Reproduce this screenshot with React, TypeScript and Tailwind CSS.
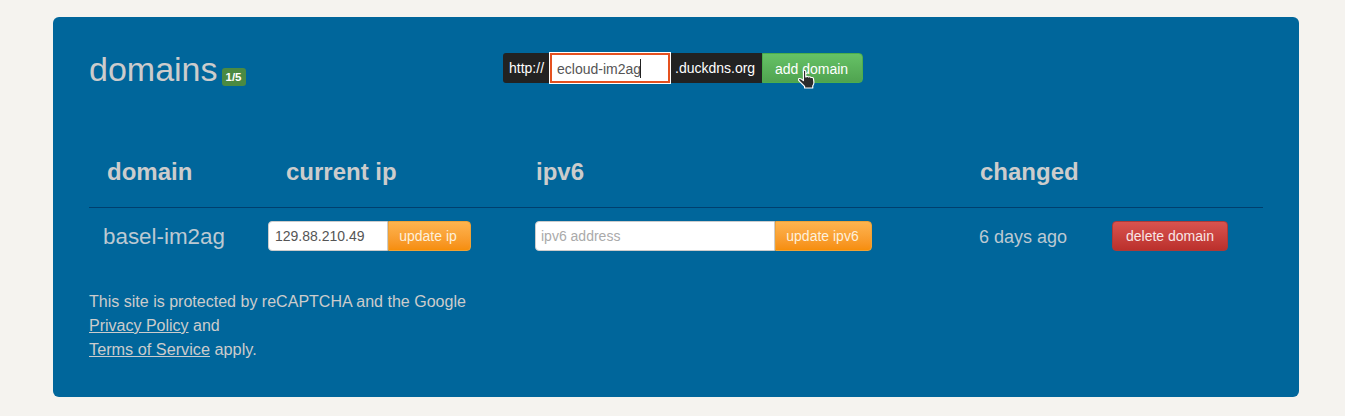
export default function App() {
  return (
    <div className="h-[416px] bg-[#f5f3ef] pt-[17px] px-[53px] pr-[46px] font-['Liberation_Sans',Arial,sans-serif] text-[14px] overflow-hidden">
      <div className="h-[380px] rounded-[6px] bg-[#00669b] pl-[36px] pr-[36px] text-[#cccccc]">
        <div className="flex h-[131px]">
          <div className="w-[414px] pt-[32px] flex items-start">
            <span className="text-[34px] leading-[40px]">domains</span>
            <span className="ml-[4px] mt-[19px] h-[18px] w-[24px] rounded-[3px] bg-[#4b8a42] text-center text-[11.5px] font-bold leading-[18px] text-white">1/5</span>
          </div>
          <div className="pt-[36px]">
            <div className="flex h-[30px] text-[14px] leading-[30px]">
              <span className="w-[46px] rounded-l-[3px] bg-[#222222] pl-[6px] text-white">http://</span>
              <div className="relative h-[32px] -mt-[1px] w-[122px] border border-white bg-white">
                <div className="h-full border-2 border-[#e5511f] pl-[5px] text-[#555555] leading-[28px]">ecloud-im2ag</div>
                <span className="absolute left-[90px] top-[6px] h-[19px] w-px bg-[#222222]" />
              </div>
              <span className="w-[91px] bg-[#222222] pl-[4px] text-white">.duckdns.org</span>
              <div className="relative h-[30px] w-[101px] rounded-r-[4px] border border-[#4cae4c] bg-gradient-to-b from-[#66c266] to-[#50a350] pr-[2px] text-center leading-[30px] text-white">
                add domain
                <svg className="absolute left-[34px] top-[15px]" width="21" height="20" viewBox="0 0 18 19" preserveAspectRatio="none">
                  <path d="M5.500 2.200c0-1.300 2-1.300 2 0V7.500h.3c.5-.7 1.800-.6 2.100.2.600-.5 1.800-.3 2.100.5.700-.4 1.900-.1 2.100 1l.4 3.300c.1 1.500-.4 2.600-1 3.500V18H6.500v-1.500L2 11.500c-.9-1-.9-2-.2-2.400.8-.4 1.900.1 3.700 2z" fill="#2b2b2b" stroke="#ffffff" strokeWidth="1" strokeLinejoin="round" />
                </svg>
              </div>
            </div>
          </div>
        </div>
        <div className="grid h-[60px] grid-cols-[179px_267px_444px_133px_1fr] items-center border-b border-[#003f6e] pb-[12px] text-[24px] font-bold leading-[28px]">
          <span className="pl-[18px]">domain</span>
          <span className="pl-[18px]">current ip</span>
          <span className="pl-[1px]">ipv6</span>
          <span className="pl-[1px]">changed</span>
          <span />
        </div>
        <div className="grid h-[56px] grid-cols-[179px_267px_444px_133px_1fr] items-center">
          <span className="pl-[14px] pt-[1px] text-[22.4px] text-[#bcc9d2]">basel-im2ag</span>
          <div className="flex h-[30px] w-[203px]">
            <input readOnly value="129.88.210.49" className="h-full w-[120px] rounded-l-[4px] border border-[#cccccc] bg-white px-[6px] text-[14px] text-[#555555] outline-none" />
            <span className="flex-1 rounded-r-[4px] border border-[#eea236] bg-gradient-to-b from-[#fdb44e] to-[#f68e0a] pr-[3px] text-center leading-[28px] text-[#fdf0dc]">update ip</span>
          </div>
          <div className="flex h-[30px] w-[337px]">
            <input readOnly placeholder="ipv6 address" className="h-full w-[240px] rounded-l-[4px] border border-[#cccccc] bg-white px-[5px] text-[14px] text-[#555555] outline-none placeholder:text-[#aaaaaa]" />
            <span className="flex-1 rounded-r-[4px] border border-[#eea236] bg-gradient-to-b from-[#fdb44e] to-[#f68e0a] pr-[2px] text-center leading-[28px] text-[#fdf0dc]">update ipv6</span>
          </div>
          <span className="pt-[2px] text-[18px] text-[#bcc9d2]">6 days ago</span>
          <span className="h-[30px] w-[116px] rounded-[4px] border border-[#ac3a38] bg-gradient-to-b from-[#d9534f] to-[#bb302c] text-center leading-[28px] text-[#f8e6e6]">delete domain</span>
        </div>
        <div className="pt-[25px] text-[16px] leading-[24px] text-[#cccccc]">
          <p className="text-[16.05px]">This site is protected by reCAPTCHA and the Google</p>
          <p className="h-[24px] pt-px"><a className="underline">Privacy Policy</a> and</p>
          <p className="text-[16.25px]"><a className="underline">Terms of Service</a> apply.</p>
        </div>
      </div>
    </div>
  );
}
